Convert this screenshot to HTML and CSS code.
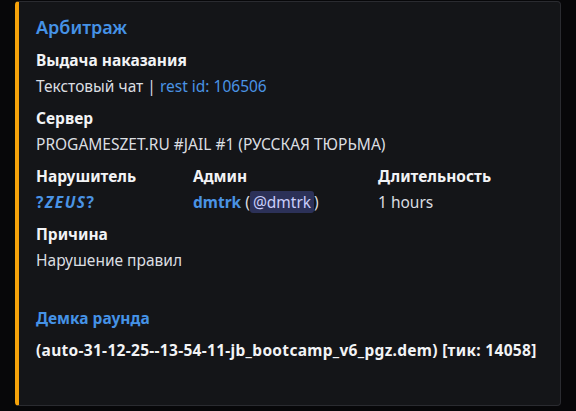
FILE: index.html
```html
<!DOCTYPE html>
<html lang="ru">
<head>
<meta charset="utf-8">
<link rel="stylesheet" href="styles.css">
</head>
<body>
<div class="wrap">
  <div class="embed">
    <div class="title">Арбитраж</div>
    <div class="fields">
      <div class="field full">
        <div class="name">Выдача наказания</div>
        <div class="value">Текстовый чат | <span class="link">rest id: 106506</span></div>
      </div>
      <div class="field full">
        <div class="name">Сервер</div>
        <div class="value">PROGAMESZET.RU #JAIL #1 (РУССКАЯ ТЮРЬМА)</div>
      </div>
      <div class="field">
        <div class="name">Нарушитель</div>
        <div class="value"><span class="link bold wide">?<em>ZEUS</em>?</span></div>
      </div>
      <div class="field">
        <div class="name">Админ</div>
        <div class="value"><span class="link bold">dmtrk</span> (<span class="mention">@dmtrk</span>)</div>
      </div>
      <div class="field">
        <div class="name">Длительность</div>
        <div class="value">1 hours</div>
      </div>
      <div class="field full">
        <div class="name">Причина</div>
        <div class="value">Нарушение правил</div>
      </div>
      <div class="field full demo">
        <div class="name link">Демка раунда</div>
        <div class="value strong">(auto-31-12-25--13-54-11-jb_bootcamp_v6_pgz.dem) [тик: 14058]</div>
      </div>
    </div>
  </div>
</div>
</body>
</html>
```
FILE: styles.css
```css
html, body {
  margin: 0;
  background: #070709;
}
body {
  font-family: "Noto Sans", "Open Sans", sans-serif;
  color: #dbdee1;
}
.wrap {
  padding: 1px 0 0 15px;
}
.embed {
  box-sizing: border-box;
  width: 546px;
  height: 405px;
  background: #141518;
  border: 1px solid #2a2b30;
  border-left: 4px solid #f5a20a;
  border-radius: 4px;
  padding: 13px 16px 16px 17px;
}
.title {
  font-size: 18px;
  line-height: 24px;
  font-weight: 600;
  color: #4592e6;
  margin-bottom: 10px;
}
.fields {
  display: grid;
  grid-template-columns: 157px 185px 1fr;
  row-gap: 10px;
}
.field.full {
  grid-column: 1 / 4;
}
.name {
  font-size: 15.5px;
  line-height: 22px;
  font-weight: 700;
  color: #f2f3f5;
  margin-bottom: 4px;
}
.value {
  font-size: 15.5px;
  line-height: 22px;
  color: #dbdee1;
}
.link {
  color: #4a93e4;
}
.bold {
  font-weight: 700;
}
.wide {
  letter-spacing: 1.5px;
}
.mention {
  background: #2c3158;
  color: #c9cdfb;
  border-radius: 3px;
  padding: 0 3px;
}
.demo {
  margin-top: 26px;
}
.demo .name {
  color: #4592e6;
  margin-bottom: 10px;
}
.demo .value.strong {
  font-weight: 700;
  color: #f2f3f5;
  letter-spacing: 0.3px;
}
```
